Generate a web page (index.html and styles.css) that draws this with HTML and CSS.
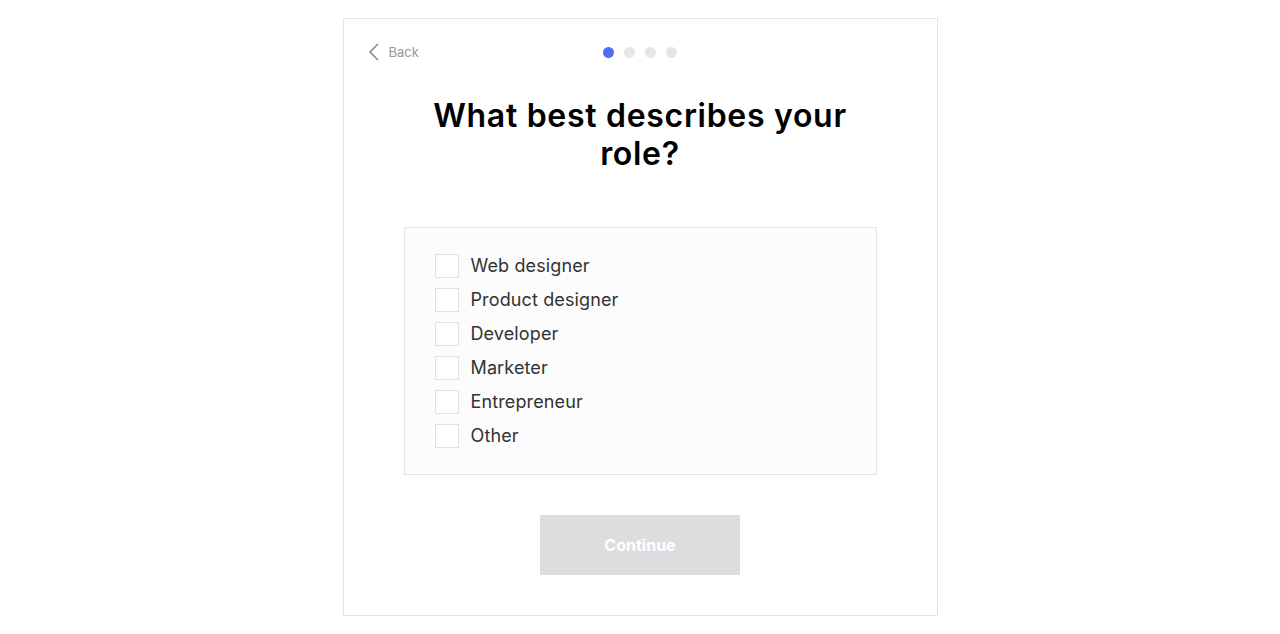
FILE: index.html
```html
<!DOCTYPE html>
<html>
<head>
<meta charset="utf-8">
<link rel="stylesheet" href="styles.css">
</head>
<body>
<div class="card">
  <div class="header">
    <a class="back">
      <svg width="12" height="18" viewBox="0 0 12 18"><path d="M10 1 L2 9 L10 17" fill="none" stroke="#8a8a8a" stroke-width="1.6"/></svg>
      <span>Back</span>
    </a>
    <div class="dots">
      <span class="dot active"></span><span class="dot"></span><span class="dot"></span><span class="dot"></span>
    </div>
  </div>
  <h1 class="title">What best describes your<br>role?</h1>
  <div class="options">
    <label class="option"><span class="box"></span>Web designer</label>
    <label class="option"><span class="box"></span>Product designer</label>
    <label class="option"><span class="box"></span>Developer</label>
    <label class="option"><span class="box"></span>Marketer</label>
    <label class="option"><span class="box"></span>Entrepreneur</label>
    <label class="option"><span class="box"></span>Other</label>
  </div>
  <button class="continue">Continue</button>
</div>
</body>
</html>
```
FILE: styles.css
```css
html, body { margin: 0; padding: 0; background: #fff; }
body { font-family: "Inter", "Liberation Sans", sans-serif; }
.card {
  width: 593px;
  margin: 18px auto 0;
  border: 1px solid #e5e5e5;
  box-sizing: content-box;
  height: 596px;
  display: flex;
  flex-direction: column;
  align-items: center;
}
.header {
  position: relative;
  align-self: stretch;
  height: 24px;
  margin-top: 21px;
  display: flex;
  align-items: center;
  justify-content: center;
}
.back {
  position: absolute;
  left: 24px;
  top: 0;
  height: 24px;
  display: flex;
  align-items: center;
  gap: 9px;
  color: #999;
  font-size: 13px;
}
.dots { display: flex; gap: 10px; }
.dot { width: 11px; height: 11px; border-radius: 50%; background: #e6e6e6; }
.dot.active { background: #4f70f5; }
.title {
  margin: 33px 0 0;
  font-size: 32px;
  line-height: 38px;
  font-weight: 600;
  text-align: center;
  color: #000;
  letter-spacing: 0.7px;
}
.options {
  margin-top: 54px;
  width: 411px;
  padding: 26px 30px 26px 30px;
  background: #fcfcfc;
  border: 1px solid #e5e5e5;
  display: flex;
  flex-direction: column;
  gap: 10px;
}
.option {
  display: flex;
  align-items: center;
  gap: 12px;
  height: 24px;
  font-size: 18px;
  line-height: 22px;
  color: #333;
  letter-spacing: 0.12px;
}
.box {
  width: 22px; height: 22px;
  border: 1px solid #e0e0e0;
  background: #fff;
}
.continue {
  margin-top: 40px;
  width: 200px;
  height: 60px;
  border: none;
  background: #dcdddf;
  color: #fff;
  font-family: inherit;
  font-weight: 700;
  font-size: 16px;
}
```
